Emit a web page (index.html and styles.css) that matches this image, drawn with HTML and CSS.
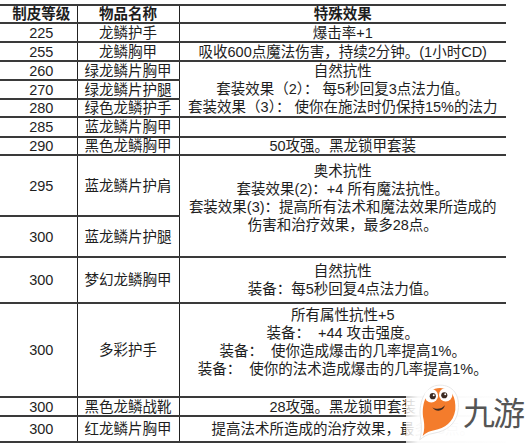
FILE: index.html
```html
<!DOCTYPE html>
<html lang="zh">
<head>
<meta charset="utf-8">
<link rel="stylesheet" href="styles.css">
</head>
<body>
<div class="page">
<table class="tbl">
  <colgroup>
    <col class="c1"><col class="c2"><col class="c3">
  </colgroup>
  <tr class="h18"><th>制皮等级</th><th>物品名称</th><th>特殊效果</th></tr>
  <tr class="h19"><td>225</td><td>龙鳞护手</td><td>爆击率+1</td></tr>
  <tr class="h19"><td>255</td><td>龙鳞胸甲</td><td>吸收600点魔法伤害，持续2分钟。(1小时CD)</td></tr>
  <tr class="h19"><td>260</td><td>绿龙鳞片胸甲</td><td rowspan="3" class="ml">自然抗性<br>套装效果（2）： 每5秒回复3点法力值。<br>套装效果（3）： 使你在施法时仍保持15%的法力</td></tr>
  <tr class="h19"><td>270</td><td>绿龙鳞片护腿</td></tr>
  <tr class="h18"><td>280</td><td>绿色龙鳞护手</td></tr>
  <tr class="h20"><td>285</td><td>蓝龙鳞片胸甲</td><td></td></tr>
  <tr class="h18"><td>290</td><td>黑色龙鳞胸甲</td><td>50攻强。黑龙锁甲套装</td></tr>
  <tr class="h61"><td>295</td><td>蓝龙鳞片护肩</td><td rowspan="2" class="ml padb">奥术抗性<br>套装效果(2)：+4 所有魔法抗性。<br>套装效果(3)：提高所有法术和魔法效果所造成的<br>伤害和治疗效果，最多28点。</td></tr>
  <tr class="h41"><td>300</td><td>蓝龙鳞片护腿</td></tr>
  <tr class="h46"><td>300</td><td>梦幻龙鳞胸甲</td><td class="ml">自然抗性<br>装备：每5秒回复4点法力值。</td></tr>
  <tr class="h94"><td>300</td><td>多彩护手</td><td class="ml padb">所有属性抗性+5<br>装备：&nbsp; +44 攻击强度。<br>装备：&nbsp; 使你造成爆击的几率提高1%。<br>装备：&nbsp; 使你的法术造成爆击的几率提高1%。</td></tr>
  <tr class="h19"><td>300</td><td>黑色龙鳞战靴</td><td>28攻强。黑龙锁甲套装</td></tr>
  <tr class="h26"><td>300</td><td>红龙鳞片胸甲</td><td>提高法术所造成的治疗效果，最多33点。</td></tr>
</table>
<div class="logo">
  <svg class="blob" viewBox="0 0 50 64" width="48" height="62">
    <path d="M26 4 C40 4 47 15 45 30 C43 45 32 52 20 54 C13 55 8 58 5 61 C7 54 7 47 6 40 C3 25 9 4 26 4 Z" fill="#ffffff" stroke="#e6e6e6" stroke-width="1"/>
    <path d="M26 7 C38 7 43 16 42 30 C40 43 31 49 20 51 C14 52 11 54 8 57 C10 51 10 46 9 40 C6 26 11 7 26 7 Z" fill="#f47c2c"/>
    <circle cx="17" cy="15" r="7" fill="#fff"/>
    <circle cx="32" cy="14" r="7" fill="#fff"/>
    <circle cx="18.5" cy="15.5" r="3.2" fill="#3b2a22"/>
    <circle cx="30.5" cy="14.5" r="3.2" fill="#3b2a22"/>
    <circle cx="19.5" cy="14.5" r="1" fill="#fff"/>
    <circle cx="31.5" cy="13.5" r="1" fill="#fff"/>
    <path d="M18 27 C22 30 28 29 31 25 C30 31 22 33 18 27 Z" fill="#3b2a22"/>
  </svg>
  <span class="logo-text">九游</span>
</div>
</div>
</body>
</html>
```

FILE: styles.css
```css
html, body {
  margin: 0;
  padding: 0;
  background: #ffffff;
}
.page {
  position: relative;
  width: 526px;
  height: 443px;
  overflow: hidden;
  padding-top: 4px;
  box-sizing: border-box;
}
.tbl {
  border-collapse: collapse;
  width: 506px;
  table-layout: fixed;
  font-family: "Liberation Sans", "Noto Sans CJK SC", sans-serif;
  font-size: 14.5px;
  color: #1e1e1e;
  line-height: 16px;
}
.c1 { width: 77px; }
.c2 { width: 102px; }
.c3 { width: 327px; }
.tbl th, .tbl td {
  border-top: 2px solid #3a3a3a;
  border-bottom: 2px solid #3a3a3a;
  border-left: 1px solid #222;
  border-right: 1px solid #222;
  padding: 0;
  text-align: center;
  vertical-align: middle;
  white-space: nowrap;
  overflow: hidden;
}
.tbl th { font-weight: bold; }
.tbl tr > :first-child { border-left: none; padding-left: 6px; }
.tbl tr > :last-child { border-right: none; }
.tbl td.ml { line-height: 18px; border-right: none; }
.h18 { height: 18px; }
.h19 { height: 19px; }
.h20 { height: 20px; }
.h26 { height: 26px; }
.h41 { height: 41px; }
.h46 { height: 46px; }
.h61 { height: 61px; }
.h94 { height: 94px; }
.padb { padding-bottom: 16px !important; }

.logo {
  position: absolute;
  left: 406px;
  top: 378px;
  width: 120px;
  height: 65px;
  background: linear-gradient(90deg, rgba(255,255,255,0.75) 0px, rgba(255,255,255,0.97) 12px, #ffffff 100%);
  display: flex;
  align-items: center;
  gap: 0;
  padding-left: 9px;
  box-sizing: border-box;
}
.blob { display: block; margin-top: 2px; }
.logo-text {
  font-family: "Noto Sans CJK SC", sans-serif;
  font-size: 32px;
  color: #555555;
  line-height: 1;
  letter-spacing: -2px;
}
```
